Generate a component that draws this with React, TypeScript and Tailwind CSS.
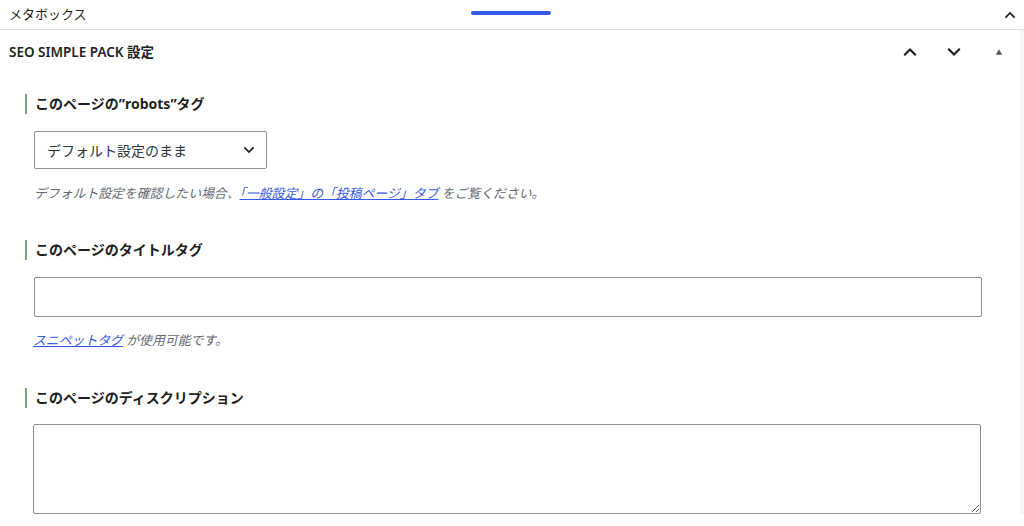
import { useState } from 'react'

const font = { fontFamily: '"Noto Sans", "Noto Sans CJK JP", sans-serif' }

function ChevronUp({ className = '' }: { className?: string }) {
  return (
    <svg viewBox="0 0 24 24" className={className} fill="none" stroke="currentColor" strokeWidth="2.6" strokeLinecap="square">
      <path d="M6 15l6-6 6 6" />
    </svg>
  )
}

function ChevronDown({ className = '' }: { className?: string }) {
  return (
    <svg viewBox="0 0 24 24" className={className} fill="none" stroke="currentColor" strokeWidth="2.6" strokeLinecap="square">
      <path d="M6 9l6 6 6-6" />
    </svg>
  )
}

function FieldLabel({ children }: { children: React.ReactNode }) {
  return (
    <div className="ml-[25px] border-l-2 border-[#7fa37f] pl-[8px] text-[14px] font-bold leading-[20px] text-[#1e1e1e]">
      {children}
    </div>
  )
}

export default function App() {
  const [robots, setRobots] = useState('default')

  return (
    <div className="h-[526px] w-[1024px] overflow-hidden bg-white text-[#1e1e1e]" style={font}>
      {/* top bar */}
      <div className="relative flex h-[30px] items-center justify-between border-b border-[#e0e0e0] pl-[9px] pr-[6px]">
        <span className="text-[13px]">メタボックス</span>
        <div className="absolute left-[471px] top-[11px] h-[4px] w-[80px] rounded-full bg-[#3858e9]" />
        <ChevronUp className="h-[16px] w-[16px]" />
      </div>

      <div className="border-r-[4px] border-[#f6f7f7]">
        {/* panel header */}
        <div className="flex h-[44px] items-center justify-between pl-[9px] pr-[17px]">
          <span className="text-[13.5px] font-semibold text-[#1d2327]">SEO SIMPLE PACK 設定</span>
          <div className="flex items-center">
            <ChevronUp className="h-[20px] w-[20px]" />
            <ChevronDown className="ml-[24px] h-[20px] w-[20px]" />
            <svg viewBox="0 0 10 10" className="ml-[31px] h-[8px] w-[8px] text-[#50575e]">
              <path d="M5 1.5L9 8.5H1z" fill="currentColor" />
            </svg>
          </div>
        </div>

        {/* robots */}
        <div className="mt-[20px]">
          <FieldLabel>このページの”robots”タグ</FieldLabel>
          <div className="relative ml-[34px] mt-[17px] w-[233px]">
            <select
              value={robots}
              onChange={(e) => setRobots(e.target.value)}
              className="h-[38px] w-full appearance-none rounded-[2px] border border-[#8c8f94] bg-white pl-[12px] pr-[30px] text-[14px] text-[#2c3338] outline-none"
              style={font}
            >
              <option value="default">デフォルト設定のまま</option>
              <option value="index">index</option>
              <option value="noindex">noindex</option>
            </select>
            <ChevronDown className="pointer-events-none absolute right-[10px] top-[11px] h-[16px] w-[16px] text-[#1e1e1e]" />
          </div>
          <p className="ml-[34px] mt-[14px] text-[12.85px] italic leading-[20px] text-[#646970]">
            デフォルト設定を確認したい場合、
            <a href="#" className="text-[#3858e9] underline">「一般設定」の「投稿ページ」タブ</a>
            {' '}をご覧ください。
          </p>
        </div>

        {/* title */}
        <div className="mt-[37px]">
          <FieldLabel>このページのタイトルタグ</FieldLabel>
          <input
            type="text"
            className="ml-[34px] mt-[17px] block h-[40px] w-[948px] rounded-[2px] border border-[#8c8f94] bg-white px-[8px] text-[14px] outline-none"
          />
          <p className="ml-[33px] mt-[13px] text-[12.85px] italic leading-[20px] text-[#646970]">
            <a href="#" className="text-[#3858e9] underline">スニペットタグ</a> が使用可能です。
          </p>
        </div>

        {/* description */}
        <div className="mt-[38px]">
          <FieldLabel>このページのディスクリプション</FieldLabel>
          <textarea
            className="ml-[33px] mt-[16px] block h-[90px] w-[948px] rounded-[2px] border border-[#8c8f94] bg-white px-[8px] py-[4px] text-[14px] outline-none"
          />
        </div>
      </div>
    </div>
  )
}
